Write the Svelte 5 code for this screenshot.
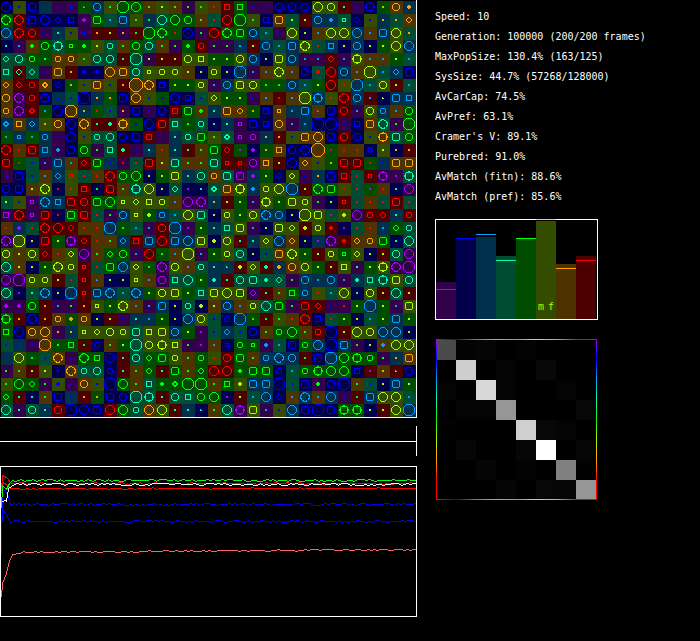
<script>
	const hues = {
		p: '#aa00ff',
		b: '#0000ff',
		c: '#00a0ff',
		t: '#00ffaa',
		g: '#00ff00',
		y: '#aaff00',
		o: '#ffa500',
		r: '#ff0000'
	};

	const soils = {
		p: '#33004c',
		b: '#00004c',
		c: '#00304c',
		t: '#004c33',
		g: '#004c00',
		y: '#334c00',
		o: '#4c3300',
		r: '#4c0000'
	};

	// one cell = soil, organism hue, organism shape
	const world = [
		'bbO yb. bbq cc- pb. pb+ gg: cco yg. ggQ ggO og. yy. og. pg. yg. or. rrS ggS pb. pb. bbo bbo bbo yyO yyo rt. pb. bbX go. ooo co+',
		'ggD rrD bbq bbD bbd bbS pp+ ggq tc. ccq yg. cg. ttO ggO ggo og. tr. rrO ggQ yg. bbS ooq ty. ry. cco cc+ tts bbd yb. co. to. ood',
		'ccO rrD rro pb. ct. yb. pb+ ro. ry. po. rg. ggQ ggD gr. bbO pg. rrO ggD ggq cco tc. pb. yyO by. oc. yyO yyO ccO oc. ccq yyO to.',
		'bt. pc. og+ ggo ttX ggs gg+ yy. tti og. ggo tto og. pg. gg+ rri pg. pg. cc. ry. cco tc. ccq yyD tr. ccS by. cco by. gy. yyO ccO',
		'ttd tto ggi gt. ooi ooi yg. tto tto rt. ttQ py. ry. ry. yyo yyS gy. gy. yyo cco by. yyq cco pc. pc. rrd pc. yyX oc. oc. gy. tc.',
		'ttS rtd ttd pb. ooq ro. bb+ bb+ ooO ooq tto yys yyi yyi oy. by. yyi by. ccQ pc. oc. yyD oc. bbo tr+ rrO cco oc. yyQ tc. ccd bbq',
		'ood rrd rri oo* bbd go. yb. ooq yb. ro. ooZ ooD bbS gy. gy. yyi pc. cco yyq yyo gg. gg. cco tc. gy. rrO yr. ccQ tc. yyo ry. tc.',
		'ooo ppD rri bbX cb. tb. bbQ co. go. bbq ooO yb. gb. bbD bbS tb. yyd gy. gy. pb. oc. rr. oc. yyQ ccX yr. rrD cco rc. by: ccq ccS',
		'ooi ppD rr* gc. bbO ooQ co. gr. tb. po. bbq pb. bbo rrS ggq og+ ct. ooq ood go. bbS oos cc. ccq oc: bbq rro pc. yyo cci oc. ggo',
		'cc* ooS ccd yo. ooo bbO ooD rt. rt+ ooX gb. bbO rrq ttS gg. tti bt. ct. pps bbq bbS ooo pc. cc. bbQ bbQ pb. bbS ooq ttD pg. ggQ',
		'gc. ccs gc. cci pb. bbO yb. tti tto bbo bbq rrS pp- ct. tti ggq yg. tt* pps ppi co. ro. yb. ooq ooO bbq rro bbo yb. ooX ttq ggo',
		'rrD or. rrq ccS pc+ bbo ggo pg. ttS rt+ pb. ct. or. ct. rt. og. ggq rrd gp. bp+ go. ooS bbo bbD ooZ gr. or. or. bb* yy. bo. ro.',
		'rrq gr. tb. pc. ccq oc. rrd ggq cb. pr. tr. rrq oy. ttq og. og. ttq rrs rrs ppo ooS ry. bbO ood yb. go. rrq rrq gr. cb. ooq ooq',
		'pb. bbq tb. oc. ccd yrs tr. or. rrD ggo ggO by. gy. yyq ct. tto ooi ttq ppq cp+ gy. bbd yyd pb. co. bbX rrS tr. rrs ppX pp. ttX',
		'bbo bbq oy. yyD br. yr. rrS bg. rrq og. ttX yyO by. ttd bp. bt. tt* ooq yyX cc+ yyi yyO ccQ ry. ggD ggq yr. tr. gp. or. bt. ppO',
		'ty. yb. pps ccD ccS rrq rro ggq ggO yys yyd yyS yyi oc. ppO ppD co. ry. gy. pc. yyX gy. yyq yyi pg. by. rrs tr. or. tr. rrq tr.',
		'ppS rrD pps rrq br. ggq rrq tr. pg. cco yys gy+ cci tc. yyO ttq by. yyi gy. yyo ccD cco by. yyQ yyq tr. yy+ ppO rri rrd ct. rri',
		'or. cp+ tr. rrD rrO rrd or. or. ccQ gg. tc. pc. rro ccQ pp. gy. ct. ttS yyq pc. by. yyq yyd ry+ yyi rr+ bp. tr. or. cc. ggd tti',
		'ppD yyQ by. rrq gy. ppX rrd or. og. ccd rrS ccq rrO ccq ccO yyq by+ yyo rt. ct. yyd ccO ood by. cp. ppD rr+ ood ooi ggq bt. ttO',
		'yyo oy. yyo rrd or. yyd ppO og. ggd ggo pc. rrO gg. oc. yyQ pc. gy. yyi tto by. tb. ooq yyD gy. ry. yyi ggs yyd by. ry. tto ppO',
		'ttO oy. by. gy. yyD yyi rrs tr. ggq ccO yyd gg. ppD yyo oc. tti ct. ct: ry+ yyd rt+ co+ ooo yyo gy. ry. yyS pt. gy. yyX ppD ppQ',
		'ppO ppQ yyi yyi ry. tr. rrs oc: by. by. yys oc. ppo ttS ttO gy. ct+ rt. tto ttq tt+ ttd pg. cco cc. cco pc. ct+ ttS ttX yyq tto',
		'ttO bp. tt. ccD by. ccQ rrs ccq ccD tc. ccD gy. yyo yyq gy. ttS yyq yyO yyq ppd rt. og. ggS cci yr. tc. yyO bt. yyo ry. ttO ry.',
		'pp+ pp+ ggo ro. pc. pg. ro. yys gy. yyD oc. pc. ccq by. tti by+ oy. cco oc. yyi ttO ggq pg. rrq rrd pb. pr. gy. ccQ gy. pc. yyq',
		'ggX ro. bbD ro. ooi go+ ooi by. ry. pb. ct. cc. gy. by. ccO yyo tb. bbi ccQ gg. rg. yg. or. rrD bbS tr. gy. by. tc. gy. ccq gy.',
		'ggS bbO ooo ooO po. co. yys yyd yyo yyi ttq yyS yyq cco gy. pp. tb. ccd tb. bbo og. ggi ggO og. rri bbQ ry. yyO yyo ccO ccO by.',
		'tb. cb. pb. ooQ gg. ggS rg. bbi og. gy. ttQ yyo yyX yyS pg. pp. oc. bbs ggi ggs pc+ tc. bbq ggi ccO bbQ ccq pg. by. oc+ yyO yyO',
		'cc- yyO gg. tb. ooD pb. ggD ggS bbO rt. tto ggd ggq yyi og. ggi yr. rro ggq og. cci ccD cco rg. bbq ccQ ggO ggX ggi pg. co. ooq',
		'pg. og. ry. yy. bb. ooD tti tto bbi rt. og. ggd rt. ggq og. ggd rrO rrO gg+ ggq ggq bbi tc. ggi ggX ggO ggO bbS rp. oo. ro: bbo',
		'yg. ggO ggd pg. yb+ pb. ooo yb. bbQ ggO og. ttS gg+ gg* ggQ ggQ og. ggS yy+ ccq ccq bbQ tb. bbq pg+ bbo bbQ og. tb. by. ccq gy.',
		'ggd rt. bt. og. bbq cb. ro. go. bbq bbo ttQ ttX rt. tto ttS ggo ggO bp. ry. tc. ccO bbd oc. ccD oc. ccO pb. rg. ccq yyO yyO tc.',
		'ttO pt. tto ct. rro bbQ bbO bbq rrO ggO tti ooO yyO rt. ct. bt: og. ttO ppX yyq pc. yb. ccO bbq bbQ bbq ggX ggX by. ry. yyO ccQ'
	].map((row) => row.split(' '));

	// half width and corner cut of an outlined organism
	function ring(r, cut) {
		const k = r - cut;
		return `M${-k} ${-r}H${k}L${r} ${-k}V${k}L${k} ${r}H${-k}L${-r} ${k}V${-k}Z`;
	}

	const spikes = (r) => `M-1 ${0.5 - r}h2M-1 ${r - 0.5}h2M${0.5 - r} -1v2M${r - 0.5} -1v2`;

	const outlines = {
		s: ring(1.5, 0),
		S: ring(2.5, 0),
		i: ring(2.5, 1),
		d: ring(2.5, 2),
		'*': ring(1.5, 0) + spikes(3),
		q: ring(3.5, 1),
		o: ring(3.5, 2),
		D: 'M-.5 -4.5H.5L3.5 -2.5L4.5 -.5V.5L3.5 2.5L2.5 3.5L.5 4.5H-.5L-2.5 3.5L-3.5 2.5L-4.5 .5V-.5L-3.5 -2.5L-2.5 -3.5Z',
		O: ring(4.5, 3),
		X: ring(3.5, 1) + spikes(5),
		Q: ring(5.5, 3),
		Z: ring(6.5, 4)
	};

	const solids = {
		'.': 'M-1 -1h2v2h-2Z',
		':': 'M-1 -1h1v1h1v1h-2Z',
		'+': 'M-1 -2h2v1h1v2h-1v1h-2v-1h-1v-2h1Z'
	};

	const stats = [
		['Speed', '10'],
		['Generation', '100000 (200/200 frames)'],
		['MaxPopSize', '130.4% (163/125)'],
		['SysSize', '44.7% (57268/128000)'],
		['AvCarCap', '74.5%'],
		['AvPref', '63.1%'],
		["Cramer's V", '89.1%'],
		['Purebred', '91.0%'],
		['AvMatch (fitn)', '88.6%'],
		['AvMatch (pref)', '85.6%']
	];

	// top of the bar and of its marker, from the top of the frame
	const bars = [
		{ hue: 'p', top: 63, mark: 70 },
		{ hue: 'b', top: 20, mark: 19 },
		{ hue: 'c', top: 18, mark: 15 },
		{ hue: 't', top: 37, mark: 41 },
		{ hue: 'g', top: 20, mark: 19 },
		{ hue: 'y', top: 2, mark: 0 },
		{ hue: 'o', top: 45, mark: 49 },
		{ hue: 'r', top: 37, mark: 41 }
	];

	const matches = [
		[75, 3, 5, 0, 3, 0, 0, 0],
		[0, 206, 0, 4, 0, 8, 0, 0],
		[4, 0, 216, 4, 0, 0, 4, 0],
		[0, 4, 4, 150, 0, 0, 0, 7],
		[2, 0, 0, 0, 207, 7, 4, 0],
		[0, 6, 0, 0, 6, 255, 0, 6],
		[0, 0, 5, 0, 3, 0, 128, 2],
		[0, 0, 0, 5, 0, 7, 6, 150]
	];

	const traces = [
		{ color: '#ff6464', start: [[1, 131], [2, 117], [6, 107], [9, 95], [12, 88], [20, 87]], from: 86, to: 83, wobble: 0.7 },
		{ color: '#0000ff', start: [[1, 89], [2, 24], [5, 24], [8, 31], [10, 39]], from: 38, to: 38, wobble: 1 },
		{ color: '#0000ff', start: [[1, 59], [2, 43], [6, 48], [10, 57], [12, 55]], from: 55, to: 55, wobble: 1 },
		{ color: '#ff0000', start: [[1, 27], [2, 16], [6, 18], [9, 22]], from: 22, to: 22, wobble: 0.6 },
		{ color: '#ff0000', start: [[1, 25], [2, 9], [6, 11], [11, 17]], from: 17, to: 17, wobble: 0.6 },
		{ color: '#ffffff', start: [[2, 35], [5, 34], [6, 35], [8, 22], [11, 20]], from: 18, to: 18, wobble: 1.2 },
		{ color: '#00ff00', start: [[1, 42], [2, 19], [6, 23], [9, 17]], from: 14, to: 14, wobble: 1 }
	];

	function tracePoints({ start, from, to, wobble }, seed) {
		const points = start.map(([x, y]) => [x + 0.5, y + 0.5]);
		let n = seed * 7919 + 17;
		for (let x = start[start.length - 1][0] + 3; x < 419; x += 3) {
			n = (n * 16807) % 2147483647;
			const noise = (n / 1073741824 - 1) * wobble;
			const y = Math.round(from + ((to - from) * x) / 416 + noise);
			points.push([x + 0.5, y + 0.5]);
		}
		return points.join(' ');
	}

	const stops = Object.values(hues);
</script>

<main>
	<div class="views">
		<svg width="417" height="418" viewBox="0 0 417 418" role="img" aria-label="World">
			{#each world as row, r}
				{#each row as cell, c}
					<rect x={c * 13} y={r * 13 + 1} width="13" height="13" fill={soils[cell[0]]} />
					{#if outlines[cell[2]]}
						<path
							d={outlines[cell[2]]}
							transform="translate({c * 13 + 6} {r * 13 + 7})"
							fill="none"
							stroke={hues[cell[1]]}
						/>
					{:else if solids[cell[2]]}
						<path
							d={solids[cell[2]]}
							transform="translate({c * 13 + 6} {r * 13 + 7})"
							fill={hues[cell[1]]}
						/>
					{/if}
				{/each}
			{/each}
			<path d="M.5 0V417" stroke="#000" />
			<path d="M416.5 0V417.5H0" fill="none" stroke="#fff" />
		</svg>

		<svg width="417" height="32" viewBox="0 0 417 32" role="img" aria-label="Timeline">
			<path d="M0 15.5H416M416.5 0V30" stroke="#fff" />
		</svg>

		<svg width="417" height="151" viewBox="0 0 417 151" role="img" aria-label="History">
			{#each traces as trace, i}
				<polyline points={tracePoints(trace, i + 1)} fill="none" stroke={trace.color} />
			{/each}
			<rect x=".5" y=".5" width="416" height="150" fill="none" stroke="#fff" />
		</svg>
	</div>

	<aside>
		<ul>
			{#each stats as [label, value]}
				<li>{label}: {value}</li>
			{/each}
		</ul>

		<svg width="163" height="101" viewBox="0 0 163 101" role="img" aria-label="Population">
			<rect x=".5" y=".5" width="162" height="100" fill="none" stroke="#fff" />
			{#each bars as { hue, top, mark }, i}
				<rect x={i * 20 + 1} y={top} width="20" height={100 - top} fill={soils[hue]} />
				<rect x={i * 20 + 1} y={mark} width="20" height="1" fill={hues[hue]} />
			{/each}
			<text x="103" y="91" fill={hues.y}>m</text>
			<text x="113" y="91" fill={hues.y}>f</text>
		</svg>

		<svg width="163" height="161" viewBox="0 0 163 161" role="img" aria-label="Matches">
			<defs>
				<linearGradient id="across">
					{#each stops as color, i}
						<stop offset={i / 8} stop-color={color} />
					{/each}
				</linearGradient>
				<linearGradient id="down" x2="0" y2="1">
					{#each stops as color, i}
						<stop offset={i / 8} stop-color={color} />
					{/each}
				</linearGradient>
			</defs>
			{#each matches as row, r}
				{#each row as v, c}
					<rect x={c * 20 + 1} y={r * 20 + 1} width="20" height="20" fill="rgb({v},{v},{v})" />
				{/each}
			{/each}
			<rect x="1" y="0" width="161" height="1" fill="url(#across)" />
			<rect x="1" y="160" width="161" height="1" fill="url(#across)" />
			<rect x="1" y="0" width="1" height="161" fill="url(#down)" />
			<rect x="161" y="0" width="1" height="161" fill="url(#down)" />
		</svg>
	</aside>
</main>

<style>
	:global(body) {
		margin: 0;
		background: #000;
	}

	main {
		display: grid;
		grid-template-columns: minmax(0, 417px) minmax(0, 1fr);
		column-gap: 18px;
		color: #fff;
		font-family: 'DejaVu Sans Mono', monospace;
		font-size: 10px;
	}

	.views {
		display: flex;
		flex-direction: column;
		gap: 8px;
	}

	svg {
		display: block;
		max-width: 100%;
		height: auto;
		shape-rendering: crispEdges;
	}

	aside {
		display: flex;
		flex-direction: column;
		gap: 12px;
		padding-top: 7px;
	}

	ul {
		margin: 0;
		padding: 0;
		list-style: none;
		line-height: 20px;
	}

	aside svg + svg {
		margin-top: 7px;
	}
</style>
